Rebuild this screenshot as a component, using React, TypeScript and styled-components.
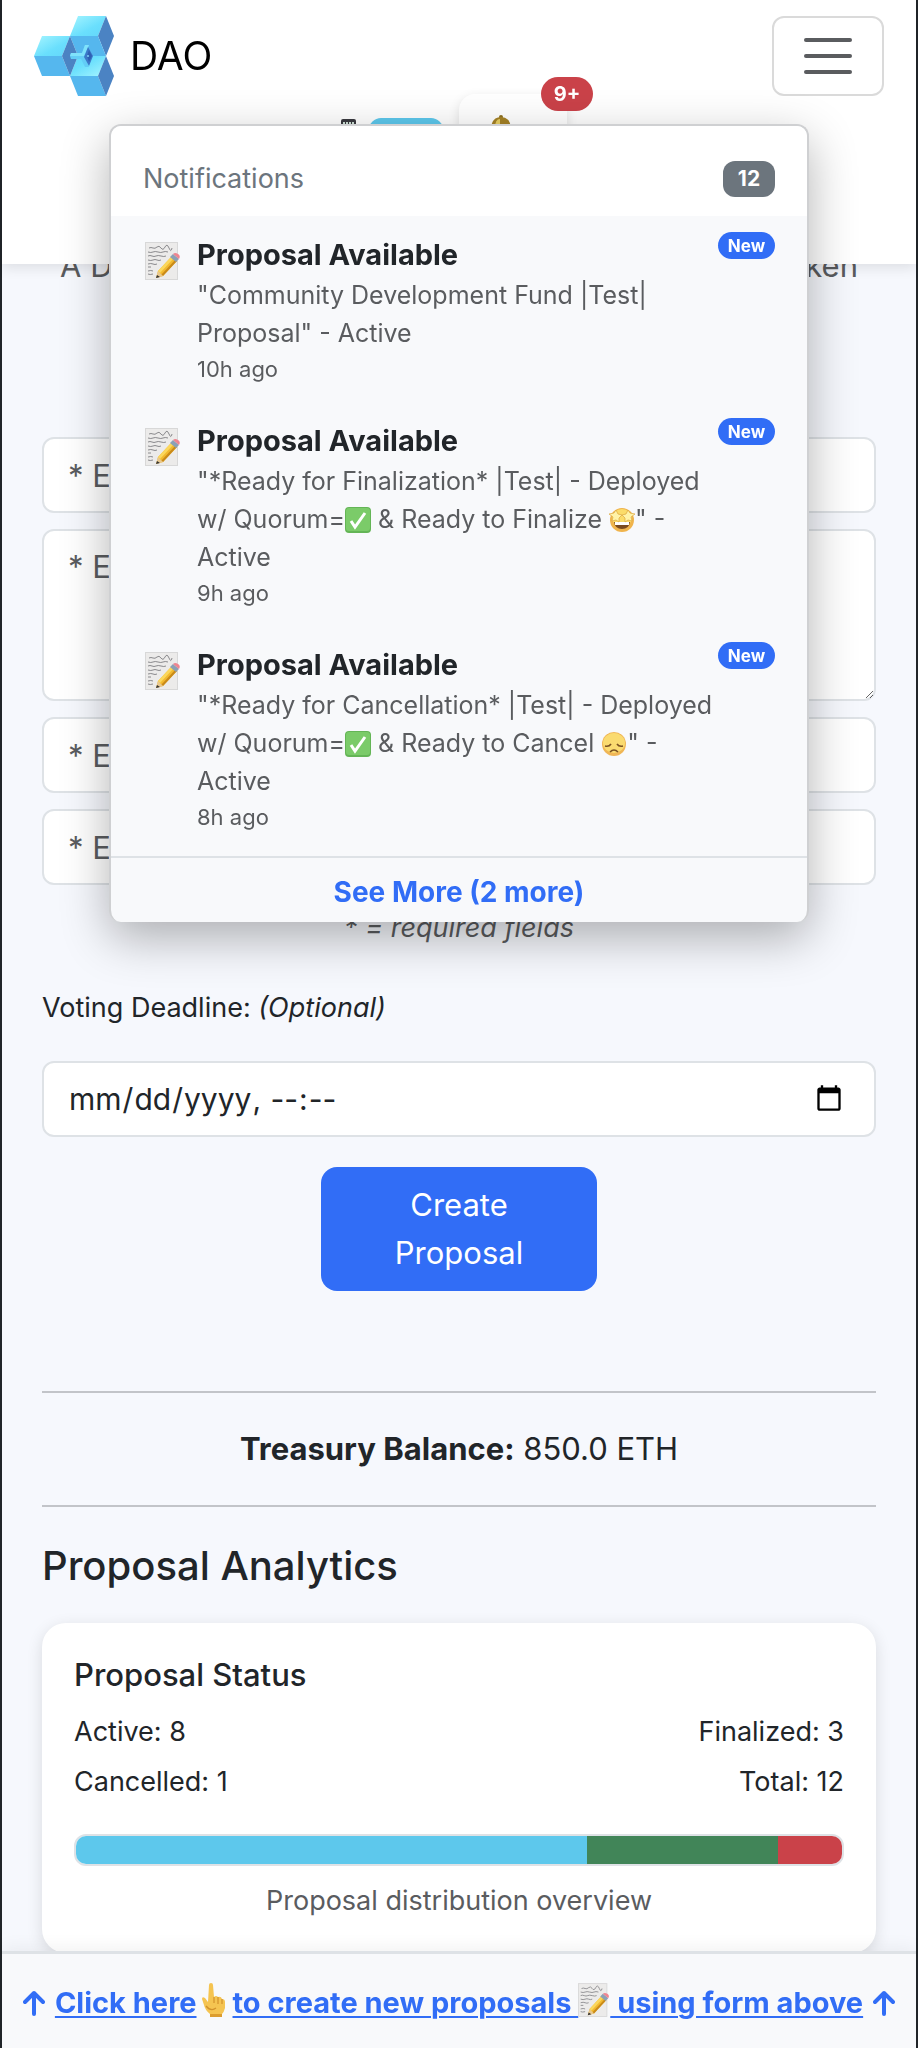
import React from "react";
import styled, { createGlobalStyle, css } from "styled-components";

const color = {
  ink: "#212529",
  muted: "#5a5c5f",
  grey: "#6c757d",
  line: "#dee2e6",
  page: "#f6f8fd",
  panel: "#f8f9fb",
  primary: "#316df6",
  danger: "#ca4249",
  info: "#5dc8ec",
  success: "#418558",
};

const GlobalStyle = createGlobalStyle`
  *, *::before, *::after { box-sizing: border-box; }
  body {
    margin: 0;
    background: ${color.page};
    color: ${color.ink};
    font-family: Inter, "Liberation Sans", sans-serif;
    font-size: 27px;
    line-height: 42px;
  }
  button, input, textarea { font-family: inherit; }
  p, h1, h2, h3, ul { margin: 0; padding: 0; }
`;

const Page = styled.div`
  min-height: 100vh;
  border: solid ${color.ink};
  border-width: 0 2px;
`;

/* Header */

const Header = styled.header`
  position: fixed;
  top: 0;
  left: 2px;
  right: 2px;
  z-index: 10;
  height: 264px;
  padding-top: 16px;
  background: #fff;
  box-shadow: 0 4px 12px rgba(0, 0, 0, 0.1);
`;

const NavBar = styled.nav`
  display: flex;
  align-items: center;
  justify-content: space-between;
  padding: 0 32px;
`;

const Brand = styled.a`
  display: flex;
  align-items: center;
  gap: 16px;
  color: #000;
  font-size: 39px;
  text-decoration: none;
`;

const MenuToggle = styled.button`
  display: flex;
  flex-direction: column;
  align-items: center;
  justify-content: center;
  gap: 12px;
  width: 112px;
  height: 80px;
  padding: 0;
  border: 2px solid #dadada;
  border-radius: 12px;
  background: transparent;
`;

const MenuLine = styled.span`
  width: 48px;
  height: 4px;
  border-radius: 2px;
  background: ${color.muted};
`;

const Tools = styled.div`
  display: flex;
  align-items: flex-start;
  justify-content: center;
  margin-top: -2px;
  padding-right: 10px;
`;

const Network = styled.span`
  display: flex;
  gap: 12px;
  margin: 24px 16px 0 0;
`;

const NetworkPill = styled.span`
  width: 74px;
  height: 36px;
  border-radius: 12px;
  background: ${color.info};
`;

const BellButton = styled.button`
  position: relative;
  display: flex;
  width: 108px;
  height: 80px;
  padding: 20px 24px;
  border: 0;
  border-radius: 16px;
  background: #fff;
  box-shadow: 0 4px 12px rgba(0, 0, 0, 0.12);
`;

const pill = css`
  display: inline-flex;
  align-items: center;
  justify-content: center;
  color: #fff;
  font-weight: 700;
`;

const UnreadCount = styled.span`
  ${pill}
  position: absolute;
  top: -17px;
  right: -26px;
  width: 52px;
  height: 34px;
  border-radius: 17px;
  background: ${color.danger};
  font-size: 20px;
  line-height: 34px;
`;

/* Notification menu */

const Menu = styled.section`
  position: absolute;
  top: 124px;
  left: 0;
  right: 0;
  width: 700px;
  max-width: 100%;
  margin: 0 auto;
  overflow: hidden;
  border: 2px solid #cfd0d2;
  border-bottom-width: 0;
  border-radius: 12px;
  background: ${color.panel};
  box-shadow: 0 16px 48px rgba(0, 0, 0, 0.3);
`;

const MenuHeader = styled.div`
  display: flex;
  align-items: center;
  justify-content: space-between;
  height: 90px;
  padding: 16px 32px 0;
  background: #fff;
`;

const MenuTitle = styled.h2`
  color: ${color.grey};
  font-size: 27px;
  font-weight: 400;
`;

const TotalBadge = styled.span`
  ${pill}
  width: 52px;
  height: 36px;
  border-radius: 12px;
  background: ${color.grey};
  font-size: 21px;
`;

const List = styled.ul`
  list-style: none;
  padding-bottom: 6px;
`;

const Item = styled.li`
  display: flex;
  align-items: flex-start;
  padding: 16px 32px;
`;

const ItemIcon = styled.span`
  display: flex;
  flex: none;
  width: 54px;
  padding: 10px 0 0 2px;
`;

const ItemBody = styled.div`
  flex: 1;
  min-width: 0;
  padding-top: 2px;
`;

const ItemTitle = styled.h3`
  font-size: 29px;
  line-height: 42px;
  font-weight: 700;
`;

const ItemText = styled.p`
  color: ${color.muted};
  font-size: 25px;
  line-height: 38px;
`;

const ItemTime = styled.p`
  color: ${color.muted};
  font-size: 22px;
  line-height: 34px;
`;

const NewBadge = styled.span`
  ${pill}
  flex: none;
  width: 57px;
  height: 27px;
  border-radius: 14px;
  background: ${color.primary};
  font-size: 17px;
`;

const SeeMore = styled.button`
  display: block;
  width: 100%;
  height: 66px;
  padding: 4px 0 0;
  border: 0;
  border-top: 2px solid ${color.line};
  background: transparent;
  color: ${color.primary};
  font-size: 28px;
  font-weight: 700;
`;

/* Page content */

const Main = styled.main`
  padding: 242px 40px 80px;
`;

const Intro = styled.p`
  color: ${color.muted};
  font-size: 31px;
  line-height: 48px;
  text-align: center;
`;

const Form = styled.form`
  display: flex;
  flex-direction: column;
  gap: 16px;
  margin-top: 147px;
`;

const field = css`
  display: block;
  width: 100%;
  border: 2px solid ${color.line};
  border-radius: 12px;
  background: #fff;
  color: ${color.ink};
  font-size: 31px;
  line-height: 48px;
  padding: 12px 24px;

  &::placeholder {
    color: ${color.muted};
    opacity: 1;
  }
`;

const Input = styled.input`
  ${field}
  height: 76px;
`;

const DateInput = styled(Input)`
  padding-right: 28px;
  font-size: 30px;

  &::-webkit-datetime-edit-ampm-field {
    display: none;
  }
`;

const TextArea = styled.textarea`
  ${field}
  height: 172px;
`;

const Required = styled.p`
  margin-top: 6px;
  color: ${color.muted};
  font-size: 27px;
  font-style: italic;
  text-align: center;
`;

const Label = styled.label`
  margin: 22px 0 16px;
`;

const Submit = styled.button`
  align-self: center;
  width: 276px;
  max-width: 100%;
  margin-top: 14px;
  padding: 14px 60px;
  border: 0;
  border-radius: 16px;
  background: ${color.primary};
  color: #fff;
  font-size: 31px;
  line-height: 48px;
`;

const Rule = styled.hr`
  height: 2px;
  margin: 0;
  border: 0;
  background: #c2c4c9;
`;

const Treasury = styled.section`
  margin-top: 100px;
`;

const Balance = styled.p`
  padding: 32px 0;
  font-size: 31px;
  line-height: 48px;
  text-align: center;
`;

const Heading = styled.h2`
  margin: 33px 0 31px;
  font-size: 40px;
  line-height: 52px;
  font-weight: 500;
`;

const Card = styled.section`
  padding: 32px 32px 31px;
  border-radius: 24px;
  background: #fff;
  box-shadow: 0 4px 16px rgba(0, 0, 0, 0.12);
`;

const CardTitle = styled.h3`
  margin-bottom: 16px;
  font-size: 31px;
  line-height: 40px;
  font-weight: 500;
`;

const StatRow = styled.div`
  display: flex;
  justify-content: space-between;
  margin-top: 8px;
`;

const Bar = styled.div`
  display: flex;
  height: 32px;
  margin: 31px 0 14px;
  overflow: hidden;
  border: 2px solid ${color.line};
  border-radius: 12px;
`;

const Segment = styled.span<{ $share: number; $fill: string }>`
  flex: ${(p) => p.$share} 1 0;
  background: ${(p) => p.$fill};
`;

const Caption = styled.p`
  color: ${color.muted};
  text-align: center;
`;

const Footer = styled.footer`
  position: fixed;
  bottom: 0;
  left: 2px;
  right: 2px;
  z-index: 5;
  display: flex;
  align-items: center;
  justify-content: center;
  gap: 10px;
  height: 97px;
  padding-top: 4px;
  border-top: 3px solid ${color.line};
  background: ${color.panel};
  box-shadow: 0 -4px 16px rgba(0, 0, 0, 0.05);
  color: ${color.primary};
  font-size: 29px;
  font-weight: 700;
`;

const FooterLink = styled.a`
  color: inherit;
  white-space: nowrap;
  text-decoration: underline;
  text-decoration-thickness: 2px;
  text-underline-offset: 3px;
`;

const Glyph = styled.svg`
  display: inline-block;
  flex: none;
  vertical-align: -5px;
`;

/* Drawings */

const Logo = () => (
  <svg width="80" height="80" viewBox="0 0 80 80" aria-hidden="true">
    <defs>
      <linearGradient id="lid" x1="0" y1="0" x2="1" y2="1">
        <stop offset="0" stopColor="#a6f5ff" />
        <stop offset="0.6" stopColor="#6adffd" />
        <stop offset="1" stopColor="#62d6fa" />
      </linearGradient>
      <linearGradient id="lidUp" x1="1" y1="1" x2="0" y2="0">
        <stop offset="0" stopColor="#a6f5ff" />
        <stop offset="0.6" stopColor="#6adffd" />
        <stop offset="1" stopColor="#62d6fa" />
      </linearGradient>
    </defs>
    <path d="M44 0H72L64 20H36Z" fill="url(#lid)" />
    <path d="M72 0L80 20L72 40L64 20Z" fill="#4b83c3" />
    <path d="M36 20H64L72 40H44Z" fill="#55b7ee" />
    <path d="M8 20H36L28 40H0Z" fill="url(#lid)" />
    <path d="M0 40H28L36 60H8Z" fill="#55b7ee" />
    <path d="M44 40H72L64 60H36Z" fill="url(#lidUp)" />
    <path d="M36 20L44 40L36 60L28 40Z" fill="#4b83c3" />
    <path d="M36 60H64L72 80H44Z" fill="#55b7ee" />
    <path d="M72 40L80 60L72 80L64 60Z" fill="#4b83c3" />
    <path d="M37 37H48L51 29H55L51 41L55 51H51L47 43H37L36 40Z" fill="#63cdf6" />
    <path d="M37 37H48L51 29H55L50 40H36Z" fill="#7fe2fb" />
    <path d="M54 31L59 40L55 50L50 41Z" fill="#3c78c8" />
    <path d="M55 34L58 40L55 46L53 40Z" fill="#2f5fb3" />
    <circle cx="54" cy="40" r="1" fill="#7fd0f6" />
  </svg>
);

const Memo = ({ size = 36 }: { size?: number }) => (
  <Glyph width={size} height={size + 3} viewBox="0 0 36 39" role="img" aria-label="memo">
    <rect x="0.5" y="0.5" width="32" height="37" fill="#ecebea" stroke="#d8d8d8" />
    <path
      d="M4 6q2-1 4 0t4-1 4 1 4-1 4 1 3 0M3 10q3 1 5 0t5 0 5 0 5 0M3 14q2-1 4 0t4 0 5 0 5 0M3 18q3 1 5 0t4 0 4 0M3 22q3-1 5 0t4 0M3 25h3M3 29q3-1 5 0M3 32q2 1 5 0"
      fill="none"
      stroke="#8a8a8d"
      strokeWidth="1"
    />
    <path d="M11 36L13 29L27 14L32 19L18 34Z" fill="#f2b92f" />
    <path d="M13 29L27 14L29 16L15 31Z" fill="#fbd75c" />
    <path d="M16 33L30 18L32 19L18 34Z" fill="#c98a1a" />
    <path d="M11 36L13 29L18 34Z" fill="#e8c88f" />
    <path d="M11 36L12 33L15 35Z" fill="#333" />
    <path d="M25 15L28 12L34 17L31 20Z" fill="#8ba0b5" />
    <path d="M28 12Q30 10 33 12Q36 14 34 17Z" fill="#ee8590" />
  </Glyph>
);

const Check = () => (
  <Glyph width="26" height="26" viewBox="0 0 26 26" role="img" aria-label="check">
    <rect width="26" height="26" rx="4" fill="#64b556" />
    <rect x="1" y="1" width="24" height="23" rx="3" fill="#7bcb69" />
    <path d="M6 14L10 20L20 6" fill="none" stroke="#fff" strokeWidth="3" />
  </Glyph>
);

const StarStruck = () => (
  <Glyph width="26" height="26" viewBox="0 0 26 26" role="img" aria-label="star-struck face">
    <circle cx="13" cy="13" r="12" fill="#f0b44c" />
    <ellipse cx="13" cy="11" rx="10" ry="9" fill="#fbdc6a" />
    <path d="M5 15H21Q20 22 13 22T5 15Z" fill="#7a4a1e" />
    <path d="M6 15H20V18H6Z" fill="#fff" />
    <path
      d="M7 3L9 7L13 8L10 11L10 15L7 13L3 14L4 10L0 7L5 6ZM19 3L21 6L26 7L22 10L23 14L19 13L16 15L16 11L13 8L17 7Z"
      fill="#fff3a8"
      stroke="#dba63f"
      strokeWidth="0.7"
    />
  </Glyph>
);

const Disappointed = () => (
  <Glyph width="26" height="26" viewBox="0 0 26 26" role="img" aria-label="disappointed face">
    <circle cx="13" cy="13" r="12" fill="#f0b656" />
    <ellipse cx="13" cy="12" rx="11" ry="10" fill="#fadb70" />
    <path d="M4 15Q8 16 10 13M16 13Q18 16 22 15M9 21Q13 17 17 21" fill="none" stroke="#7a5122" strokeWidth="1.6" />
  </Glyph>
);

const PointUp = () => (
  <Glyph width="36" height="36" viewBox="0 0 36 36" role="img" aria-label="pointing up">
    <path
      d="M12 3Q12 1 14 1T16 3L17 15Q19 13 21 15Q24 14 25 17Q28 17 28 20V26Q27 30 25 32V35H13V32Q8 28 7 23L5 17Q5 14 8 16L11 20Z"
      fill="#f5c451"
    />
    <path d="M13 32H25V35H13Z" fill="#dc9d2f" />
    <path d="M17 15V21M21 15V22M25 17V22M9 24Q14 30 19 26" fill="none" stroke="#d2922b" strokeWidth="1.2" />
  </Glyph>
);

const Phone = () => (
  <Glyph width="16" height="32" viewBox="0 0 16 32" role="img" aria-label="phone">
    <rect x="0" y="1" width="15" height="30" rx="2" fill="#3a3a40" />
    <path d="M2 5H14M2 9H14M2 13H14M2 17H14" stroke="#cfe3d8" strokeWidth="2" strokeDasharray="2 1" />
  </Glyph>
);

const Bell = () => (
  <Glyph width="36" height="40" viewBox="0 0 36 40" role="img" aria-label="bell">
    <circle cx="18" cy="3" r="2" fill="#8d7020" />
    <path d="M8 14Q9 3 18 3T28 14L30 28L34 33H2L6 28Z" fill="#a58226" />
    <path d="M12 14Q12 5 17 5L17 28H10Z" fill="#e9cf62" />
    <circle cx="18" cy="35" r="4" fill="#8d7020" />
  </Glyph>
);

const ArrowUp = () => (
  <Glyph width="22" height="26" viewBox="0 0 22 26" role="img" aria-label="up">
    <path
      d="M11 24V3M2 12L11 3L20 12"
      fill="none"
      stroke="currentColor"
      strokeWidth="4"
      strokeLinecap="round"
      strokeLinejoin="round"
    />
  </Glyph>
);

const notifications: { text: React.ReactNode; time: string }[] = [
  { text: <>"Community Development Fund |Test| Proposal" - Active</>, time: "10h ago" },
  {
    text: (
      <>
        "*Ready for Finalization* |Test| - Deployed w/ Quorum=
        <Check /> &amp; Ready to Finalize <StarStruck />" - Active
      </>
    ),
    time: "9h ago",
  },
  {
    text: (
      <>
        "*Ready for Cancellation* |Test| - Deployed w/ Quorum=
        <Check /> &amp; Ready to Cancel <Disappointed />" - Active
      </>
    ),
    time: "8h ago",
  },
];

const shares = [
  { name: "Active", count: 8, fill: color.info },
  { name: "Finalized", count: 3, fill: color.success },
  { name: "Cancelled", count: 1, fill: color.danger },
];

export default function App() {
  return (
    <Page>
      <GlobalStyle />
      <Header>
        <NavBar>
          <Brand href="#">
            <Logo />
            DAO
          </Brand>
          <MenuToggle type="button" aria-label="Toggle navigation">
            <MenuLine />
            <MenuLine />
            <MenuLine />
          </MenuToggle>
        </NavBar>
        <Tools>
          <Network>
            <Phone />
            <NetworkPill />
          </Network>
          <BellButton type="button" aria-label="Notifications">
            <Bell />
            <UnreadCount>9+</UnreadCount>
          </BellButton>
        </Tools>
        <Menu>
          <MenuHeader>
            <MenuTitle>Notifications</MenuTitle>
            <TotalBadge>12</TotalBadge>
          </MenuHeader>
          <List>
            {notifications.map((n) => (
              <Item key={n.time}>
                <ItemIcon>
                  <Memo />
                </ItemIcon>
                <ItemBody>
                  <ItemTitle>Proposal Available</ItemTitle>
                  <ItemText>{n.text}</ItemText>
                  <ItemTime>{n.time}</ItemTime>
                </ItemBody>
                <NewBadge>New</NewBadge>
              </Item>
            ))}
          </List>
          <SeeMore type="button">See More (2 more)</SeeMore>
        </Menu>
      </Header>

      <Main>
        <Intro>A Decentralized Governance Platform for a DAO Token</Intro>
        <Form>
          <Input aria-label="Name" placeholder="* Enter name" />
          <TextArea aria-label="Description" placeholder="* Enter description" />
          <Input aria-label="Amount" placeholder="* Enter amount" />
          <Input aria-label="Recipient" placeholder="* Enter address" />
          <Required>* = required fields</Required>
          <Label htmlFor="deadline">
            Voting Deadline: <em>(Optional)</em>
          </Label>
          <DateInput id="deadline" type="datetime-local" />
          <Submit type="button">Create Proposal</Submit>
        </Form>

        <Treasury>
          <Rule />
          <Balance>
            <strong>Treasury Balance:</strong> 850.0 ETH
          </Balance>
          <Rule />
        </Treasury>

        <Heading>Proposal Analytics</Heading>
        <Card>
          <CardTitle>Proposal Status</CardTitle>
          <StatRow>
            <span>Active: 8</span>
            <span>Finalized: 3</span>
          </StatRow>
          <StatRow>
            <span>Cancelled: 1</span>
            <span>Total: 12</span>
          </StatRow>
          <Bar>
            {shares.map((s) => (
              <Segment key={s.name} $share={s.count} $fill={s.fill} />
            ))}
          </Bar>
          <Caption>Proposal distribution overview</Caption>
        </Card>
      </Main>

      <Footer>
        <ArrowUp />
        <FooterLink href="#deadline">
          Click here
          <PointUp />
          to create new proposals <Memo size={32} /> using form above
        </FooterLink>
        <ArrowUp />
      </Footer>
    </Page>
  );
}
